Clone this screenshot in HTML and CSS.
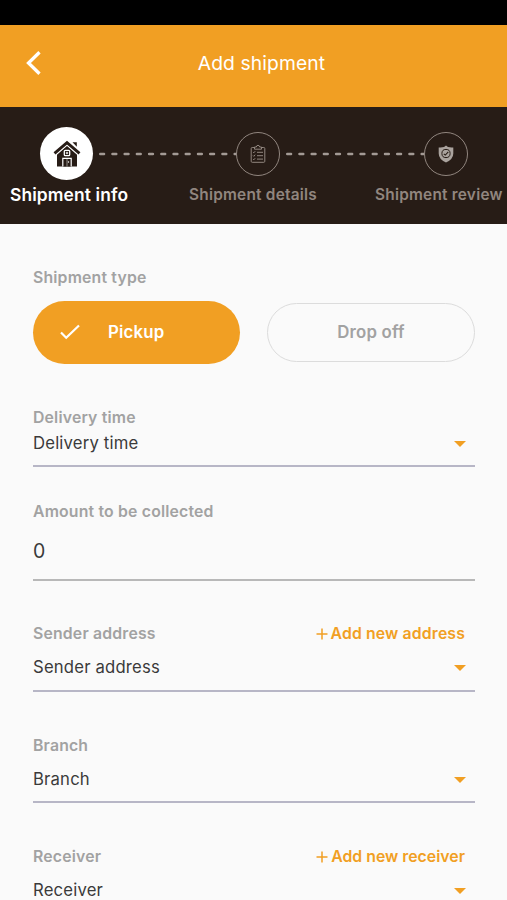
FILE: index.html
```html
<!DOCTYPE html>
<html lang="en">
<head>
<meta charset="utf-8">
<title>Add shipment</title>
<link rel="stylesheet" href="styles.css">
</head>
<body>
<div class="status-bar"></div>
<header class="app-bar">
  <svg class="back" viewBox="0 0 18 26"><path d="M15.500 2.200 4.500 13l11 10.800" fill="none" stroke="#fff" stroke-width="3.300"/></svg>
  <h1 class="title">Add shipment</h1>
</header>
<nav class="stepper">
  <div class="track">
    <div class="dot dot-active">
      <svg width="28" height="28" viewBox="0 0 28 28">
        <path d="M4 14 14 5.500 24 14v12.500H4z" fill="#271c16"/>
        <path d="M1.500 13.500 14 2.700l12.500 10.800" fill="none" stroke="#fff" stroke-width="5"/>
        <path d="M1.500 13.300 14 2.700l12.500 10.600" fill="none" stroke="#271c16" stroke-width="2.900"/>
        <path d="M19.500 2.200h4.300v4.600z" fill="#271c16"/>
        <rect x="11.300" y="10.300" width="5.400" height="5.400" rx="1" fill="#271c16" stroke="#fff" stroke-width="1.300"/>
        <path d="M14 11.800v2.400M12.800 13h2.400" stroke="#fff" stroke-width="1"/>
        <path d="M9.800 26.500v-8.200h8.400v8.200" fill="#271c16" stroke="#fff" stroke-width="1.200"/>
        <path d="M14 18.300v8.200" stroke="#fff" stroke-width=".5"/>
        <circle cx="15.500" cy="22" r=".7" fill="#fff"/>
      </svg>
    </div>
    <svg class="dashes first" viewBox="0 0 138 4"><path d="M1.200 2H138" fill="none" stroke="#a39a95" stroke-width="2.400" stroke-linecap="round" stroke-dasharray="3.900 8.320"/></svg>
    <div class="dot">
      <svg width="16" height="20" viewBox="0 0 16 20" fill="none" stroke="#91867f" stroke-width="1">
        <path d="M4.500 3.500H2.200q-1 0-1 1v12.800q0 1 1 1h11.600q1 0 1-1V4.500q0-1-1-1h-2.300"/>
        <path d="M4.500 5.200V3h1.800q.3-1.700 1.700-1.700T9.700 3h1.800v2.200z"/>
        <path d="m3 8 .8.800 1.400-1.600M3 11.500l.8.800 1.400-1.600M3 15l.8.800 1.400-1.600M7 8.300h6M7 11.700h6M7 15.100h6"/>
      </svg>
    </div>
    <svg class="dashes second" viewBox="0 0 138 4"><path d="M1.200 2H138" fill="none" stroke="#a39a95" stroke-width="2.400" stroke-linecap="round" stroke-dasharray="3.900 8.320"/></svg>
    <div class="dot">
      <svg width="16" height="18" viewBox="0 0 16 18">
        <path d="M8 .5 10 2q2.500.7 5.300.4v6Q15.300 14 8 17.500.7 14 .7 8.400v-6Q3.500 2.700 6 2z" fill="#aaa39e"/>
        <circle cx="8" cy="8.500" r="4.100" fill="none" stroke="#271c16" stroke-width="1"/>
        <path d="m5.800 8.800 1.500 1.300 3-3.200" fill="none" stroke="#271c16" stroke-width="1.100"/>
      </svg>
    </div>
  </div>
  <div class="step-labels">
    <span class="step current">Shipment info</span>
    <span class="step s-details">Shipment details</span>
    <span class="step s-review">Shipment review</span>
  </div>
</nav>
<main class="form">
  <div class="label">Shipment type</div>
  <div class="types">
    <button class="pill selected">
      <svg class="check" viewBox="0 0 22 18"><path d="m2 9.500 5.200 5.200L20 2.500" fill="none" stroke="#fff" stroke-width="2.200"/></svg>
      <span>Pickup</span>
    </button>
    <button class="pill">Drop off</button>
  </div>
  <section class="field delivery">
    <div class="label">Delivery time</div>
    <div class="select"><span>Delivery time</span><i class="caret"></i></div>
  </section>
  <section class="field amount">
    <div class="label">Amount to be collected</div>
    <div class="input">0</div>
  </section>
  <section class="field sender">
    <div class="head"><div class="label">Sender address</div><a class="add"><svg class="plus" viewBox="0 0 12 12"><path d="M6 .5v11M.5 6h11" stroke="#f19f23" stroke-width="1.500"/></svg>Add new address</a></div>
    <div class="select"><span>Sender address</span><i class="caret"></i></div>
  </section>
  <section class="field branch">
    <div class="label">Branch</div>
    <div class="select"><span>Branch</span><i class="caret"></i></div>
  </section>
  <section class="field receiver">
    <div class="head"><div class="label">Receiver</div><a class="add add-receiver"><svg class="plus" viewBox="0 0 12 12"><path d="M6 .5v11M.5 6h11" stroke="#f19f23" stroke-width="1.500"/></svg>Add new receiver</a></div>
    <div class="select"><span>Receiver</span><i class="caret"></i></div>
  </section>
</main>
</body>
</html>
```
FILE: styles.css
```css
* { box-sizing: border-box; }
html, body { height: 900px; overflow: hidden; }
body { margin: 0; background: #fafafa; color: #3a3a3a; font-family: Inter, "Liberation Sans", sans-serif; font-size: 16px; }
svg { display: block; flex: none; }
.status-bar { height: 25px; background: #000; }
.app-bar { height: 82px; background: #f19f23; display: grid; grid-template-columns: 60px 1fr 45px; align-items: center; padding-bottom: 6px; }
.back { width: 18px; height: 26px; margin-left: 24px; }
.title { margin: 0; padding-left: 1px; text-align: center; font-size: 19.300px; font-weight: 400; color: #fff; letter-spacing: .1px; line-height: 24px; }
.stepper { height: 117px; background: #271c16; padding-top: 20px; }
.track { display: flex; align-items: center; height: 53px; padding-left: 40px; }
.dot { width: 44px; height: 44px; flex: none; border: 1.500px solid #91867f; border-radius: 50%; display: flex; align-items: center; justify-content: center; }
.dot-active { width: 53px; height: 53px; background: #fff; border: 0; }
.dashes { width: 138px; height: 4px; }
.first { margin-left: 6px; margin-right: -1px; }
.second { margin-left: 6px; }
.step-labels { display: flex; height: 30px; line-height: 30px; padding-left: 10px; white-space: nowrap; }
.step { color: #91867f; font-size: 15.400px; font-weight: 600; letter-spacing: .23px; }
.current { width: 179px; color: #fff; font-size: 17.400px; letter-spacing: .12px; }
.s-details { width: 186px; }
.form { padding: 44px 32px 0 33px; }
.label { color: #a2a2a2; font-size: 15.800px; font-weight: 600; letter-spacing: .18px; line-height: 20px; white-space: nowrap; }
.types { display: flex; justify-content: space-between; align-items: center; margin-top: 13px; height: 63px; }
.pill { width: 208px; height: 59px; border: 1.300px solid #dcdcdc; border-radius: 30px; background: transparent; color: #a2a2a2; font: inherit; font-size: 16.800px; font-weight: 600; letter-spacing: .2px; padding: 0 0 1px; }
.selected { width: 207px; height: 63px; border: 0; border-radius: 32px; background: #f19f23; color: #fff; display: flex; align-items: center; padding-left: 26px; gap: 27px; }
.check { width: 22px; height: 18px; }
.field { border-bottom: 2px solid #b7b6c6; }
.select { display: flex; justify-content: space-between; align-items: center; padding-right: 9px; color: #3a3a3a; font-size: 16.700px; letter-spacing: .18px; line-height: 22px; }
.caret { width: 12px; height: 6px; margin-top: 2px; background: #f19f23; clip-path: polygon(0 0, 100% 0, 50% 100%); }
.delivery { height: 59px; margin-top: 44px; }
.delivery .select { margin-top: 4px; }
.amount { height: 79px; margin-top: 35px; border-color: #b8b8b8; }
.input { margin-top: 17px; font-size: 19.500px; line-height: 24px; }
.sender { height: 68px; margin-top: 43px; }
.sender .select, .branch .select, .receiver .select { margin-top: 12px; }
.branch { height: 67px; margin-top: 44px; }
.receiver { height: 68px; margin-top: 44px; }
.head { display: flex; justify-content: space-between; padding-right: 10px; }
.add { display: flex; align-items: center; gap: 3px; color: #f19f23; font-size: 15.800px; font-weight: 600; letter-spacing: .14px; line-height: 20px; }
.add-receiver { letter-spacing: .02px; }
.plus { width: 12px; height: 12px; }
```
